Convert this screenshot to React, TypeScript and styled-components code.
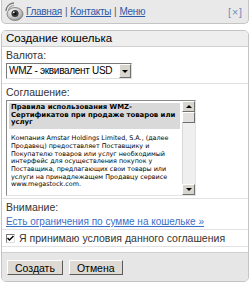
import styled, { createGlobalStyle } from 'styled-components'

const GlobalStyle = createGlobalStyle`
  html, body {
    margin: 0;
    padding: 0;
    background: #ffffff;
  }
  body {
    font-family: "Liberation Sans", Arial, sans-serif;
    font-size: 10.5px;
    color: #000;
  }
`

const rules = [
  'Компания Amstar Holdings Limited, S.A., (далее Продавец) предоставляет Поставщику и Покупателю товаров или услуг необходимый интерфейс для осуществления покупок у Поставщика, предлагающих свои товары или услуги на принадлежащем Продавцу сервисе www.megastock.com.',
]

function KeeperIcon() {
  return (
    <svg width="21" height="20" viewBox="0 0 21 20">
      <defs>
        <radialGradient id="ball" cx="0.4" cy="0.35" r="0.7">
          <stop offset="0" stopColor="#ffffff" />
          <stop offset="0.6" stopColor="#c8c8c8" />
          <stop offset="1" stopColor="#8a8a8a" />
        </radialGradient>
      </defs>
      <path d="M2 9 A8 8 0 0 1 10 1" fill="none" stroke="#777" strokeWidth="1.3" />
      <path d="M4.5 9 A5.5 5.5 0 0 1 10 3.5" fill="none" stroke="#999" strokeWidth="1.1" />
      <ellipse cx="11" cy="12" rx="8" ry="6.5" fill="url(#ball)" stroke="#7a7a7a" strokeWidth="0.8" />
      <circle cx="11" cy="11.5" r="3.6" fill="#3a3a3a" />
      <circle cx="11" cy="11.5" r="1.6" fill="#111" />
      <circle cx="9.8" cy="10.3" r="0.9" fill="#fff" />
    </svg>
  )
}

export default function App() {
  return (
    <>
      <GlobalStyle />
      <Page>
        <TopBar>
          <KeeperIcon />
          <Nav>
            <NavLink href="#">Главная</NavLink>
            <Pipe>|</Pipe>
            <NavLink href="#">Контакты</NavLink>
            <Pipe>|</Pipe>
            <NavLink href="#">Меню</NavLink>
          </Nav>
          <Close>[×]</Close>
        </TopBar>

        <Panel>
          <PanelTitle>Создание кошелька</PanelTitle>

          <Section $pb={4}>
            <Label>Валюта:</Label>
            <Select>
              <SelectText>WMZ - эквивалент USD</SelectText>
              <SelectButton>
                <Arrow $down />
              </SelectButton>
            </Select>
          </Section>

          <Section $pb={2}>
            <Label>Соглашение:</Label>
            <TextBox>
              <TextContent>
                <RulesTitle>
                  Правила использования WMZ-Сертификатов при продаже товаров или услуг
                </RulesTitle>
                {rules.map((p) => (
                  <RulesText key={p}>{p}</RulesText>
                ))}
              </TextContent>
              <ScrollBar>
                <ScrollButton>
                  <Arrow />
                </ScrollButton>
                <Thumb />
                <Track />
                <ScrollButton>
                  <Arrow $down />
                </ScrollButton>
              </ScrollBar>
            </TextBox>
          </Section>

          <Section $pb={1}>
            <Label>Внимание:</Label>
            <Limit href="#">Есть ограничения по сумме на кошельке »</Limit>
          </Section>

          <CheckRow>
            <CheckBox>
              <svg width="7" height="7" viewBox="0 0 7 7">
                <path d="M0.5 3 L2.5 5 L6.5 1" fill="none" stroke="#000" strokeWidth="1.4" />
              </svg>
            </CheckBox>
            Я принимаю условия данного соглашения
          </CheckRow>

          <Spacer />

          <Footer>
            <Button>Создать</Button>
            <Button>Отмена</Button>
          </Footer>
        </Panel>
      </Page>
    </>
  )
}

const Page = styled.div`
  width: 250px;
  height: 282px;
  padding: 0 1px;
  box-sizing: border-box;
  display: flex;
  flex-direction: column;
  gap: 6px;
  overflow: hidden;
`

const TopBar = styled.div`
  height: 24px;
  box-sizing: border-box;
  display: flex;
  align-items: center;
  padding: 0 5px 0 2px;
  background: #e9e9e9;
  border: 1px solid #c4c4c4;
  border-top: none;
  border-radius: 0 0 5px 5px;
`

const Nav = styled.div`
  display: flex;
  align-items: center;
  gap: 3px;
  margin-left: 1px;
  flex: 1;
  font-size: 10px;
  letter-spacing: -0.3px;
`

const NavLink = styled.a`
  color: #2a5aa8;
  text-decoration: underline;
`

const Pipe = styled.span`
  color: #555;
`

const Close = styled.span`
  color: #6a8cc0;
  letter-spacing: 1px;
  font-size: 10.5px;
`

const Panel = styled.div`
  flex: 1;
  display: flex;
  flex-direction: column;
  border: 1px solid #c4c4c4;
  border-radius: 5px;
  overflow: hidden;
  background: #fff;
`

const PanelTitle = styled.div`
  height: 15px;
  line-height: 15px;
  padding: 0 4px;
  font-size: 11.5px;
  background: #eeeeee;
  border-bottom: 1px solid #d0d0d0;
`

const Section = styled.div<{ $pb: number }>`
  padding: 2px 4px ${(p) => p.$pb}px;
  border-bottom: 1px solid #e2e2e2;
`

const Label = styled.div`
  color: #333;
  line-height: 13px;
  margin-bottom: 1px;
`

const Select = styled.div`
  width: 126px;
  height: 16px;
  box-sizing: border-box;
  display: flex;
  align-items: stretch;
  border: 1px solid;
  border-color: #7a7a7a #e0e0e0 #e0e0e0 #7a7a7a;
  background: #fff;
  font-size: 10px;
  letter-spacing: -0.3px;
`

const SelectText = styled.div`
  flex: 1;
  padding-left: 2px;
  line-height: 14px;
  white-space: nowrap;
  overflow: hidden;
`

const bevel = `
  background: #d8d5cf;
  border: 1px solid;
  border-color: #ffffff #6f6f6f #6f6f6f #ffffff;
  box-sizing: border-box;
`

const SelectButton = styled.div`
  ${bevel}
  width: 12px;
  display: flex;
  align-items: center;
  justify-content: center;
`

const Arrow = styled.div<{ $down?: boolean }>`
  width: 0;
  height: 0;
  border-left: 3px solid transparent;
  border-right: 3px solid transparent;
  ${(p) =>
    p.$down ? 'border-top: 3px solid #000;' : 'border-bottom: 3px solid #000;'}
`

const TextBox = styled.div`
  width: 190px;
  height: 96px;
  box-sizing: border-box;
  display: flex;
  border: 1px solid;
  border-color: #8a8a8a #e4e4e4 #e4e4e4 #8a8a8a;
  background: #fff;
`

const TextContent = styled.div`
  flex: 1;
  padding: 2px 2px 0 2px;
  overflow: hidden;
  font-family: "DejaVu Sans", Verdana, sans-serif;
`

const RulesTitle = styled.div`
  background: #d9d9d9;
  font-weight: bold;
  font-size: 6.9px;
  line-height: 7.7px;
  padding: 1px 2px 2px;
  margin-bottom: 6px;
`

const RulesText = styled.div`
  font-size: 6.4px;
  line-height: 7.7px;
  padding: 0 2px;
`

const ScrollBar = styled.div`
  width: 13px;
  display: flex;
  flex-direction: column;
  background: #ededed;
`

const ScrollButton = styled.div`
  ${bevel}
  height: 11px;
  display: flex;
  align-items: center;
  justify-content: center;
`

const Thumb = styled.div`
  ${bevel}
  height: 11px;
  background: #e2e0dc;
`

const Track = styled.div`
  flex: 1;
  background: #efefef;
  border-left: 1px solid #d8d8d8;
`

const Limit = styled.a`
  display: block;
  color: #3a6fc8;
  text-decoration: underline;
  line-height: 13px;
  font-size: 10px;
`

const CheckRow = styled.div`
  display: flex;
  align-items: center;
  gap: 4px;
  height: 16px;
  padding: 0 4px;
  border-bottom: 1px solid #e2e2e2;
  color: #333;
`

const CheckBox = styled.div`
  width: 9px;
  height: 9px;
  box-sizing: border-box;
  border: 1px solid;
  border-color: #7a7a7a #e0e0e0 #e0e0e0 #7a7a7a;
  background: #fff;
  display: flex;
  align-items: center;
  justify-content: center;
`

const Spacer = styled.div`
  height: 5px;
`

const Footer = styled.div`
  flex: 1;
  display: flex;
  align-items: flex-start;
  gap: 6px;
  padding: 7px 5px 0;
  background: #e6e6e6;
  border-top: 1px solid #cfcfcf;
`

const Button = styled.button`
  ${bevel}
  background: #dedad3;
  border-color: #ffffff #5a5a5a #5a5a5a #ffffff;
  height: 15px;
  padding: 0 7px;
  font-family: "Liberation Sans", Arial, sans-serif;
  font-size: 10.5px;
  color: #000;
`
